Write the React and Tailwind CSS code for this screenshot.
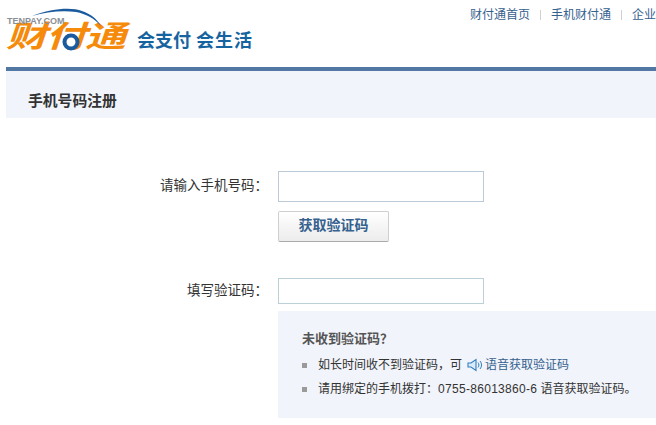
import React from 'react';

const cjk = 'font-["Liberation_Sans","Noto_Sans_CJK_SC",sans-serif]';

function Logo() {
  return (
    <div className="relative w-[260px] h-[55px] whitespace-nowrap">
      <span className={`absolute left-0 top-[20px] origin-left scale-x-[1.36] text-[30px] leading-[34px] font-bold italic tracking-[-1px] text-[#f58a0b] ${cjk}`}>财付通</span>
      {/* swoosh and the ring of the logo */}
      <svg className="absolute -left-[6px] top-0" width="110" height="52" viewBox="0 0 110 52">
        <path d="M32 16 C52 8 72 7 82 11 C91 14 97 19 101 26 C94 18 86 14 76 12 C62 10 46 12 32 16 Z" fill="#1a5a9e" />
        <circle cx="71" cy="42" r="6.5" fill="white" stroke="#1a5a9e" strokeWidth="4" />
      </svg>
      <span className="absolute left-[1px] top-[16px] text-[9px] leading-[10px] font-bold text-[#8a8f96] font-['Liberation_Sans',sans-serif]">TENPAY.COM</span>
      <span className={`absolute left-[131px] top-[29px] text-[18px] leading-[24px] font-bold text-[#15649f] ${cjk}`}>会支付</span>
      <span className={`absolute left-[190px] top-[29px] text-[18px] leading-[24px] font-bold text-[#15649f] tracking-[1px] ${cjk}`}>会生活</span>
    </div>
  );
}

function TopNav() {
  return (
    <div className="flex items-center pt-[8px] text-[12px] leading-[14px] text-[#35618e] whitespace-nowrap">
      <a>财付通首页</a>
      <span className="mx-[10px] w-px h-[10px] bg-[#d0d0d0]" />
      <a>手机财付通</a>
      <span className="mx-[10px] w-px h-[10px] bg-[#d0d0d0]" />
      <a>企业版</a>
    </div>
  );
}

function Label({ children }) {
  return <label className="w-[268px] text-right text-[13.5px] text-[#333]">{children}</label>;
}

function Speaker() {
  return (
    <svg width="16" height="14" viewBox="0 0 16 14" className="mr-[2px]">
      <path d="M1 5 H4 L9 1.5 V12.5 L4 9 H1 Z" fill="#dcebf8" stroke="#2f7fc0" strokeWidth="1.1" />
      <path d="M11 4.5 C12.2 6 12.2 8 11 9.5 M13 3 C15 5.5 15 8.5 13 11" fill="none" stroke="#2f7fc0" strokeWidth="1" />
    </svg>
  );
}

export default function App() {
  return (
    <div className={`w-[656px] h-[425px] overflow-hidden bg-white ${cjk}`}>
      <div className="flex justify-between h-[67px] pl-[6px] w-[700px]">
        <Logo />
        <div className="w-[230px]">
          <TopNav />
        </div>
      </div>
      <div className="ml-[6px] h-[4px] bg-[#5377a3]" />
      <div className="ml-[6px] h-[47px] pl-[22px] pt-[21px] bg-[#f1f5fb] text-[14.8px] leading-[18px] font-bold text-[#333]">
        手机号码注册
      </div>

      <div className="mt-[53px] flex items-center h-[31px]">
        <Label>请输入手机号码：</Label>
        <input className="ml-[10px] w-[206px] h-[31px] bg-white border border-[#bcc9d8] outline-none" />
      </div>
      <div className="mt-[9px] pl-[278px]">
        <button className="w-[111px] h-[31px] pb-[2px] text-[14px] font-bold text-[#35618e] bg-gradient-to-b from-white to-[#ececec] border border-[#cfcfcf] border-b-[#aaa] rounded-[2px]">
          获取验证码
        </button>
      </div>
      <div className="mt-[36px] flex items-center h-[26px]">
        <Label>填写验证码：</Label>
        <input className="ml-[10px] w-[206px] h-[26px] bg-white border border-[#bcd0d8] outline-none" />
      </div>

      <div className="mt-[7px] ml-[278px] h-[107px] pl-[24px] pt-[20px] bg-[#f1f4fa] text-[12px] text-[#333]">
        <div className="text-[13px] leading-[16px] font-bold text-[#555]">未收到验证码？</div>
        <div className="mt-[10px] flex items-center h-[16px] whitespace-nowrap">
          <span className="w-[5px] h-[5px] bg-[#9a9a9a] mr-[11px]" />
          如长时间收不到验证码，可
          <span className="ml-[5px]"><Speaker /></span>
          <a className="text-[#35618e]">语音获取验证码</a>
        </div>
        <div className="mt-[8px] flex items-center h-[16px] whitespace-nowrap">
          <span className="w-[5px] h-[5px] bg-[#9a9a9a] mr-[11px]" />
          请用绑定的手机拨打：<span className="tracking-[0.3px]">0755-86013860-6</span>&nbsp;语音获取验证码。
        </div>
      </div>
    </div>
  );
}
